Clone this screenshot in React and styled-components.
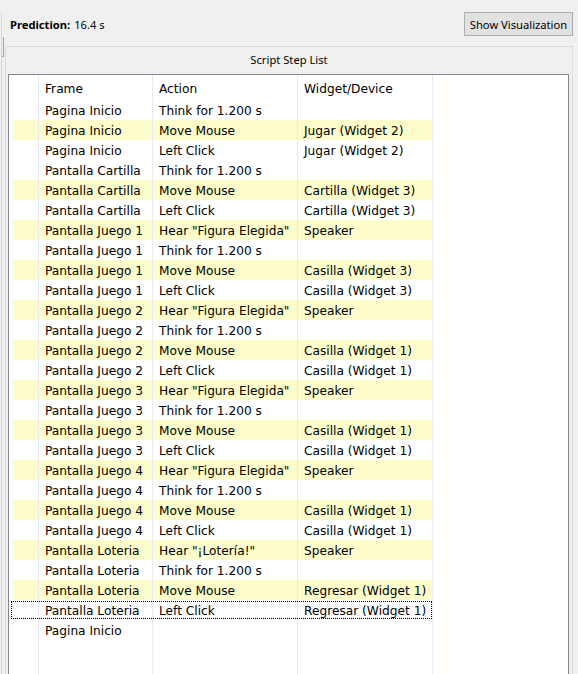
import React from "react";
import styled, { createGlobalStyle } from "styled-components";

const Global = createGlobalStyle`
  html, body { margin: 0; padding: 0; background: #f0f0f0; }
  body { width: 578px; height: 674px; overflow: hidden; }
`;

const Window = styled.div`
  display: flex;
  width: 578px;
  height: 674px;
  background: #f0f0f0;
  overflow: hidden;
`;

const SideRail = styled.div`
  width: 3px;
  flex: none;
  padding-top: 12px;
  box-sizing: border-box;
  display: flex;
`;

const RailLine = styled.div`
  position: relative;
  margin-left: 1px;
  flex: 1;
  border-left: 1px solid #d9d9d9;
  &::after {
    content: "";
    position: absolute;
    left: 0;
    top: 25px;
    width: 1px;
    height: 19px;
    border-right: 1px solid #a0a0a0;
    border-bottom: 1px solid #a0a0a0;
  }
`;

const Main = styled.div`
  flex: 1;
  display: flex;
  flex-direction: column;
  min-width: 0;
`;

const TopBar = styled.div`
  height: 46px;
  flex: none;
  display: flex;
  align-items: center;
  justify-content: space-between;
  padding: 2px 5px 0 7px;
  box-sizing: border-box;
  font-family: "Noto Sans", sans-serif;
  font-size: 11.2px;
  color: #000;
`;

const Prediction = styled.div`
  display: flex;
  gap: 4px;
  b { font-weight: 700; }
`;

const Button = styled.button`
  height: 24px;
  width: 109px;
  padding: 0;
  background: #e1e1e1;
  border: 1px solid #adadad;
  font-family: "Noto Sans", sans-serif;
  font-size: 11.2px;
  color: #000;
`;

const GroupBox = styled.div`
  flex: 1;
  display: flex;
  flex-direction: column;
  margin: 0 5px 0 2px;
  border: 1px solid #dcdcdc;
  border-bottom: none;
  min-height: 0;
`;

const GroupTitle = styled.div`
  height: 27px;
  flex: none;
  display: flex;
  align-items: center;
  justify-content: center;
  font-family: "Noto Sans", sans-serif;
  font-size: 11.2px;
  color: #000;
  padding-bottom: 2px;
  box-sizing: border-box;
`;

const TableBox = styled.div`
  flex: 1;
  margin: 0 3px 0 2px;
  background: #fff;
  border: 1px solid #828790;
  border-bottom: none;
  display: flex;
  flex-direction: column;
  font-family: "DejaVu Sans", sans-serif;
  font-size: 12.2px;
  color: #000;
  min-height: 0;
`;

const Row = styled.div`
  position: relative;
  display: grid;
  grid-template-columns: 30px 114px 145px 135px;
  width: 424px;
  height: ${(p) => p.$h || 20}px;
  flex: ${(p) => (p.$grow ? 1 : "none")};
  &::after {
    content: "";
    display: ${(p) => (p.$focus ? "block" : "none")};
    position: absolute;
    left: 2px;
    right: 1px;
    top: 1px;
    bottom: 1px;
    border: 1px dotted #000;
    pointer-events: none;
  }
`;

const Cell = styled.div`
  border-right: 1px solid #e4eaf6;
  background: ${(p) => (p.$hl ? "#fdfccb" : "transparent")};
  padding: 1px 0 0 6px;
  display: flex;
  align-items: center;
  white-space: nowrap;
  overflow: hidden;
`;

const HeadCell = styled.div`
  border-right: 1px solid #e4eaf6;
  display: flex;
  align-items: center;
  padding: 2px 0 0 6px;
  white-space: nowrap;
`;

const RowHead = styled.div`
  border-right: 1px solid #e4eaf6;
  margin-left: 5px;
  background: ${(p) => (p.$hl ? "#fdfccb" : "transparent")};
`;

const T = "Think for 1.200 s";
const M = "Move Mouse";
const L = "Left Click";
const H = 'Hear "Figura Elegida"';

const rows = [
  ["Pagina Inicio", T, "", 0],
  ["Pagina Inicio", M, "Jugar (Widget 2)", 1],
  ["Pagina Inicio", L, "Jugar (Widget 2)", 0],
  ["Pantalla Cartilla", T, "", 0],
  ["Pantalla Cartilla", M, "Cartilla (Widget 3)", 1],
  ["Pantalla Cartilla", L, "Cartilla (Widget 3)", 0],
  ["Pantalla Juego 1", H, "Speaker", 1],
  ["Pantalla Juego 1", T, "", 0],
  ["Pantalla Juego 1", M, "Casilla (Widget 3)", 1],
  ["Pantalla Juego 1", L, "Casilla (Widget 3)", 0],
  ["Pantalla Juego 2", H, "Speaker", 1],
  ["Pantalla Juego 2", T, "", 0],
  ["Pantalla Juego 2", M, "Casilla (Widget 1)", 1],
  ["Pantalla Juego 2", L, "Casilla (Widget 1)", 0],
  ["Pantalla Juego 3", H, "Speaker", 1],
  ["Pantalla Juego 3", T, "", 0],
  ["Pantalla Juego 3", M, "Casilla (Widget 1)", 1],
  ["Pantalla Juego 3", L, "Casilla (Widget 1)", 0],
  ["Pantalla Juego 4", H, "Speaker", 1],
  ["Pantalla Juego 4", T, "", 0],
  ["Pantalla Juego 4", M, "Casilla (Widget 1)", 1],
  ["Pantalla Juego 4", L, "Casilla (Widget 1)", 0],
  ["Pantalla Loteria", 'Hear "¡Lotería!"', "Speaker", 1],
  ["Pantalla Loteria", T, "", 0],
  ["Pantalla Loteria", M, "Regresar (Widget 1)", 1],
  ["Pantalla Loteria", L, "Regresar (Widget 1)", 0, true],
  ["Pagina Inicio", "", "", 0],
];

export default function App() {
  return (
    <Window>
      <Global />
      <SideRail>
        <RailLine />
      </SideRail>
      <Main>
        <TopBar>
          <Prediction>
            <b>Prediction:</b>
            <span>16.4 s</span>
          </Prediction>
          <Button>Show Visualization</Button>
        </TopBar>
        <GroupBox>
          <GroupTitle>Script Step List</GroupTitle>
          <TableBox>
            <Row $h={25}>
              <HeadCell />
              <HeadCell>Frame</HeadCell>
              <HeadCell>Action</HeadCell>
              <HeadCell>Widget/Device</HeadCell>
            </Row>
            {rows.map(([f, a, w, hl, focus], i) => (
              <Row key={i} $focus={focus}>
                <RowHead $hl={hl} />
                <Cell $hl={hl}>{f}</Cell>
                <Cell $hl={hl}>{a}</Cell>
                <Cell $hl={hl}>{w}</Cell>
              </Row>
            ))}
            <Row $grow>
              <RowHead />
              <Cell />
              <Cell />
              <Cell />
            </Row>
          </TableBox>
        </GroupBox>
      </Main>
    </Window>
  );
}
